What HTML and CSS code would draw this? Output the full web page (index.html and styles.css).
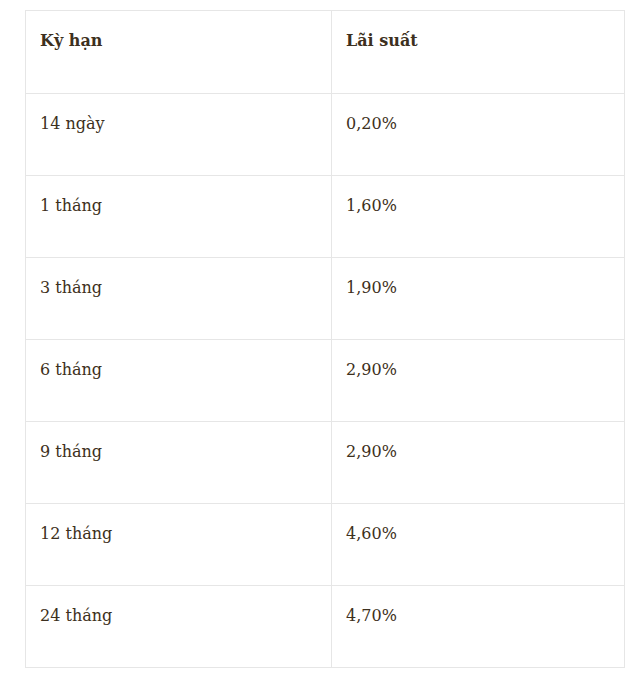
FILE: index.html
```html
<!DOCTYPE html>
<html lang="vi">
<head>
<meta charset="utf-8">
<link rel="stylesheet" href="styles.css">
</head>
<body>
<div class="wrap">
<table class="rates">
  <colgroup><col class="c1"><col class="c2"></colgroup>
  <thead>
    <tr><th>Kỳ hạn</th><th>Lãi suất</th></tr>
  </thead>
  <tbody>
    <tr><td>14 ngày</td><td>0,20%</td></tr>
    <tr><td>1 tháng</td><td>1,60%</td></tr>
    <tr><td>3 tháng</td><td>1,90%</td></tr>
    <tr><td>6 tháng</td><td>2,90%</td></tr>
    <tr><td>9 tháng</td><td>2,90%</td></tr>
    <tr><td>12 tháng</td><td>4,60%</td></tr>
    <tr><td>24 tháng</td><td>4,70%</td></tr>
  </tbody>
</table>
</div>
</body>
</html>
```
FILE: styles.css
```css
html, body { margin: 0; padding: 0; background: #fff; }
.wrap { padding: 10px 10px 0 25px; }
.rates {
  border-collapse: collapse;
  table-layout: fixed;
  width: 599px;
  font-family: "DejaVu Serif", serif;
  font-size: 16px;
  color: #3d3020;
}
.rates .c1 { width: 306px; }
.rates .c2 { width: 293px; }
.rates th, .rates td {
  border: 1px solid #e6e6e6;
  text-align: left;
  vertical-align: top;
  padding: 19px 14px 0 14px;
  height: 62px;
  font-weight: normal;
  line-height: 22px;
}
.rates th { font-weight: bold; padding-top: 19px; height: 63px; }
```
